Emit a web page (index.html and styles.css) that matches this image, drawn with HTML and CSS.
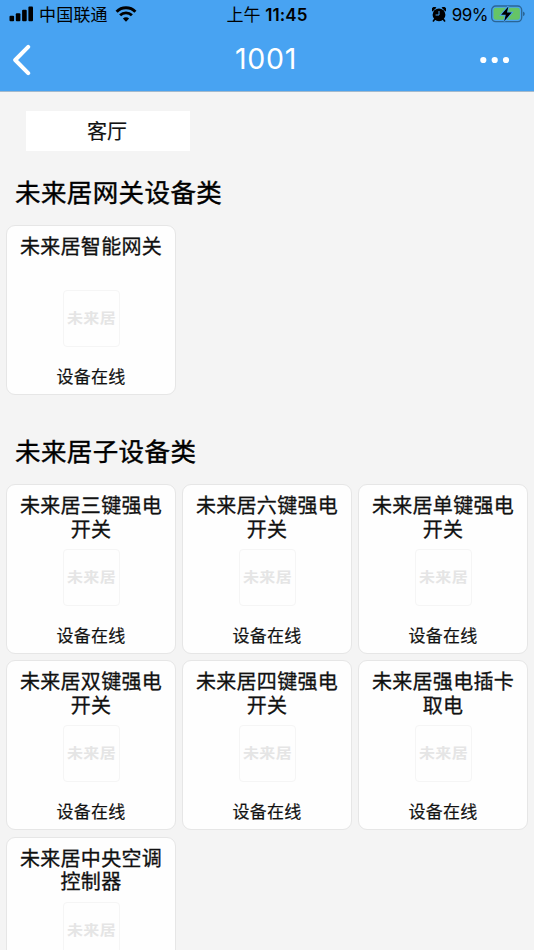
FILE: index.html
```html
<!DOCTYPE html>
<html lang="zh-CN">
<head>
  <meta charset="UTF-8" />
  <meta name="viewport" content="width=device-width, initial-scale=1.0"/>
  <title>1001</title>
  <link rel="stylesheet" href="styles.css">
</head>
<body>
  <header class="header">
    <div class="status-bar">
      <div class="status-left">
        <svg class="signal" width="24" height="16" viewBox="0 0 24 16">
          <rect x="0.5" y="9.8" width="4.6" height="5.4" rx="1"/>
          <rect x="6.8" y="7.2" width="4.6" height="8" rx="1"/>
          <rect x="13.1" y="3.8" width="4.6" height="11.4" rx="1"/>
          <rect x="19.4" y="0.6" width="4.6" height="14.6" rx="1"/>
        </svg>
        <span class="carrier">中国联通</span>
        <svg class="wifi" width="22" height="16" viewBox="0 0 22 16">
          <path d="M1.6 5.7 A13.3 13.3 0 0 1 20.4 5.7" fill="none" stroke="#000" stroke-width="3"/>
          <path d="M5.1 9.3 A8.4 8.4 0 0 1 16.9 9.3" fill="none" stroke="#000" stroke-width="2.8"/>
          <path d="M11 15.8 L7.9 12.6 A4.4 4.4 0 0 1 14.1 12.6 Z"/>
        </svg>
      </div>
      <div class="clock">上午 <b>11:45</b></div>
      <div class="status-right">
        <svg class="alarm" width="14" height="15" viewBox="0 0 14 15">
          <circle cx="7" cy="7.8" r="6.4"/>
          <path d="M0.4 4.6 A2.6 2.6 0 0 1 4.4 0.8 Z M13.6 4.6 A2.6 2.6 0 0 0 9.6 0.8 Z"/>
          <path d="M2.8 12 L1.4 14 M11.2 12 L12.6 14" stroke="#000" stroke-width="1.6" stroke-linecap="round"/>
          <path d="M7 4 V8 H3.6" fill="none" stroke="#48a3f2" stroke-width="1"/>
        </svg>
        <span class="percent">99%</span>
        <svg class="battery" width="34" height="18" viewBox="0 0 34 18">
          <rect x="0.7" y="1" width="30" height="15.6" rx="4" fill="none" stroke="#2b6595" stroke-width="1.3"/>
          <rect x="2.5" y="2.8" width="26.4" height="12" rx="2.4" fill="#65c466"/>
          <path d="M32 6.4 Q33.8 7.2 33.8 8.8 T32 11.2 Z" fill="#2b6595"/>
          <path d="M17.4 1.4 L10.1 9.8 H14.8 L13.2 16.2 L20.7 7.6 H16 Z" stroke="#48a3f2" stroke-width="1.8" paint-order="stroke"/>
        </svg>
      </div>
    </div>
    <div class="nav-bar">
      <svg class="back" width="20" height="32" viewBox="0 0 20 32">
        <path d="M17.2 2.8 L4.2 16 L17.2 29.2" fill="none" stroke="#fff" stroke-width="4" stroke-linecap="round" stroke-linejoin="round"/>
      </svg>
      <h1 class="title">1001</h1>
      <svg class="more" width="30" height="8" viewBox="0 0 30 8">
        <circle cx="3.3" cy="4" r="3.1"/>
        <circle cx="14.7" cy="4" r="3.1"/>
        <circle cx="26" cy="4" r="3.1"/>
      </svg>
    </div>
  </header>

  <main class="content">
    <div class="room">客厅</div>

    <h2 class="section-title">未来居网关设备类</h2>
    <div class="devices">
      <div class="device"><div class="name">未来居智能网关</div><div class="logo"><span>未来居</span></div><div class="state">设备在线</div></div>
    </div>

    <h2 class="section-title">未来居子设备类</h2>
    <div class="devices">
      <div class="device"><div class="name">未来居三键强电开关</div><div class="logo"><span>未来居</span></div><div class="state">设备在线</div></div>
      <div class="device"><div class="name">未来居六键强电开关</div><div class="logo"><span>未来居</span></div><div class="state">设备在线</div></div>
      <div class="device"><div class="name">未来居单键强电开关</div><div class="logo"><span>未来居</span></div><div class="state">设备在线</div></div>
      <div class="device"><div class="name">未来居双键强电开关</div><div class="logo"><span>未来居</span></div><div class="state">设备在线</div></div>
      <div class="device"><div class="name">未来居四键强电开关</div><div class="logo"><span>未来居</span></div><div class="state">设备在线</div></div>
      <div class="device"><div class="name">未来居强电插卡取电</div><div class="logo"><span>未来居</span></div><div class="state">设备在线</div></div>
      <div class="device"><div class="name">未来居中央空调控制器</div><div class="logo"><span>未来居</span></div></div>
    </div>
  </main>
</body>
</html>
```
FILE: styles.css
```css
:root {
  --primary: #48a3f2;
  --page-bg: #f4f4f4;
  --white: #ffffff;
  --text: #111;
}

* {
  box-sizing: border-box;
}

body {
  margin: 0;
  height: 950px;
  overflow: hidden;
  font-family: Inter, "Noto Sans CJK SC", sans-serif;
  background-color: var(--page-bg);
  color: var(--text);
}

svg {
  display: block;
  flex-shrink: 0;
}

.header {
  height: 92px;
  background-color: var(--primary);
  border-bottom: 1px solid #a3b9cc;
}

.status-bar {
  display: grid;
  grid-template-columns: 1fr auto 1fr;
  height: 30px;
  padding: 0 9px;
  align-items: center;
  color: #000;
  font-size: 17px;
  line-height: 30px;
}

.status-left,
.status-right {
  display: flex;
  align-items: center;
}

.status-right {
  justify-content: flex-end;
}

.signal {
  margin-top: -2px;
  margin-right: 6px;
}

.carrier {
  letter-spacing: 0.2px;
}

.wifi {
  margin-top: -2px;
  margin-left: 7px;
}

.clock b {
  font-weight: 600;
  letter-spacing: 0.1px;
}

.alarm {
  margin-top: -2px;
  margin-right: 6px;
}

.percent {
  margin-right: 3px;
  letter-spacing: -0.5px;
}

.battery {
  margin-top: -2px;
}

.nav-bar {
  display: flex;
  justify-content: space-between;
  align-items: center;
  height: 60px;
  padding: 0 24px 0 11px;
}

.title {
  margin: 0;
  padding-left: 21px;
  color: var(--white);
  font-size: 28.5px;
  font-weight: 400;
  letter-spacing: 0.7px;
  line-height: 56px;
  transform: translateY(-1px);
}

.more {
  fill: var(--white);
}

.content {
  padding: 19px 6px 0;
}

.room {
  width: 164px;
  height: 40px;
  margin-left: 20px;
  padding-right: 2px;
  background-color: var(--white);
  font-size: 20px;
  line-height: 42px;
  text-align: center;
  -webkit-text-stroke: 0.2px currentColor;
}

.section-title {
  margin: 0;
  padding-left: 9px;
  height: 74px;
  color: #000;
  font-size: 25.5px;
  font-weight: 400;
  letter-spacing: 0.4px;
  line-height: 84px;
  -webkit-text-stroke: 0.4px currentColor;
}

.devices {
  display: grid;
  grid-template-columns: repeat(3, 170px);
  grid-auto-rows: 170px;
  gap: 6.3px 6px;
}

.devices + .section-title {
  height: 89px;
  line-height: 114px;
}

.device {
  display: flex;
  flex-direction: column;
  align-items: center;
  padding-top: 10px;
  background-color: #fefefe;
  border: 1px solid #e6e6e6;
  border-radius: 9px;
}

.name {
  width: 146px;
  height: 54px;
  font-size: 20px;
  letter-spacing: 0.3px;
  line-height: 23.5px;
  text-align: center;
  -webkit-text-stroke: 0.3px currentColor;
}

.logo {
  width: 57px;
  height: 57px;
  margin-left: 1px;
  border: 1px solid #f5f5f5;
  border-radius: 4px;
  color: #e5e5e5;
  font-size: 16px;
  font-weight: 700;
  line-height: 54px;
  text-align: center;
  white-space: nowrap;
}

/* the wordmark is a little flatter than the body type */
.logo span {
  display: inline-block;
  letter-spacing: 0.3px;
  transform: scaleY(0.86);
}

.state {
  margin-top: 17px;
  font-size: 17px;
  letter-spacing: 0.3px;
  line-height: 26px;
  -webkit-text-stroke: 0.2px currentColor;
}
```
